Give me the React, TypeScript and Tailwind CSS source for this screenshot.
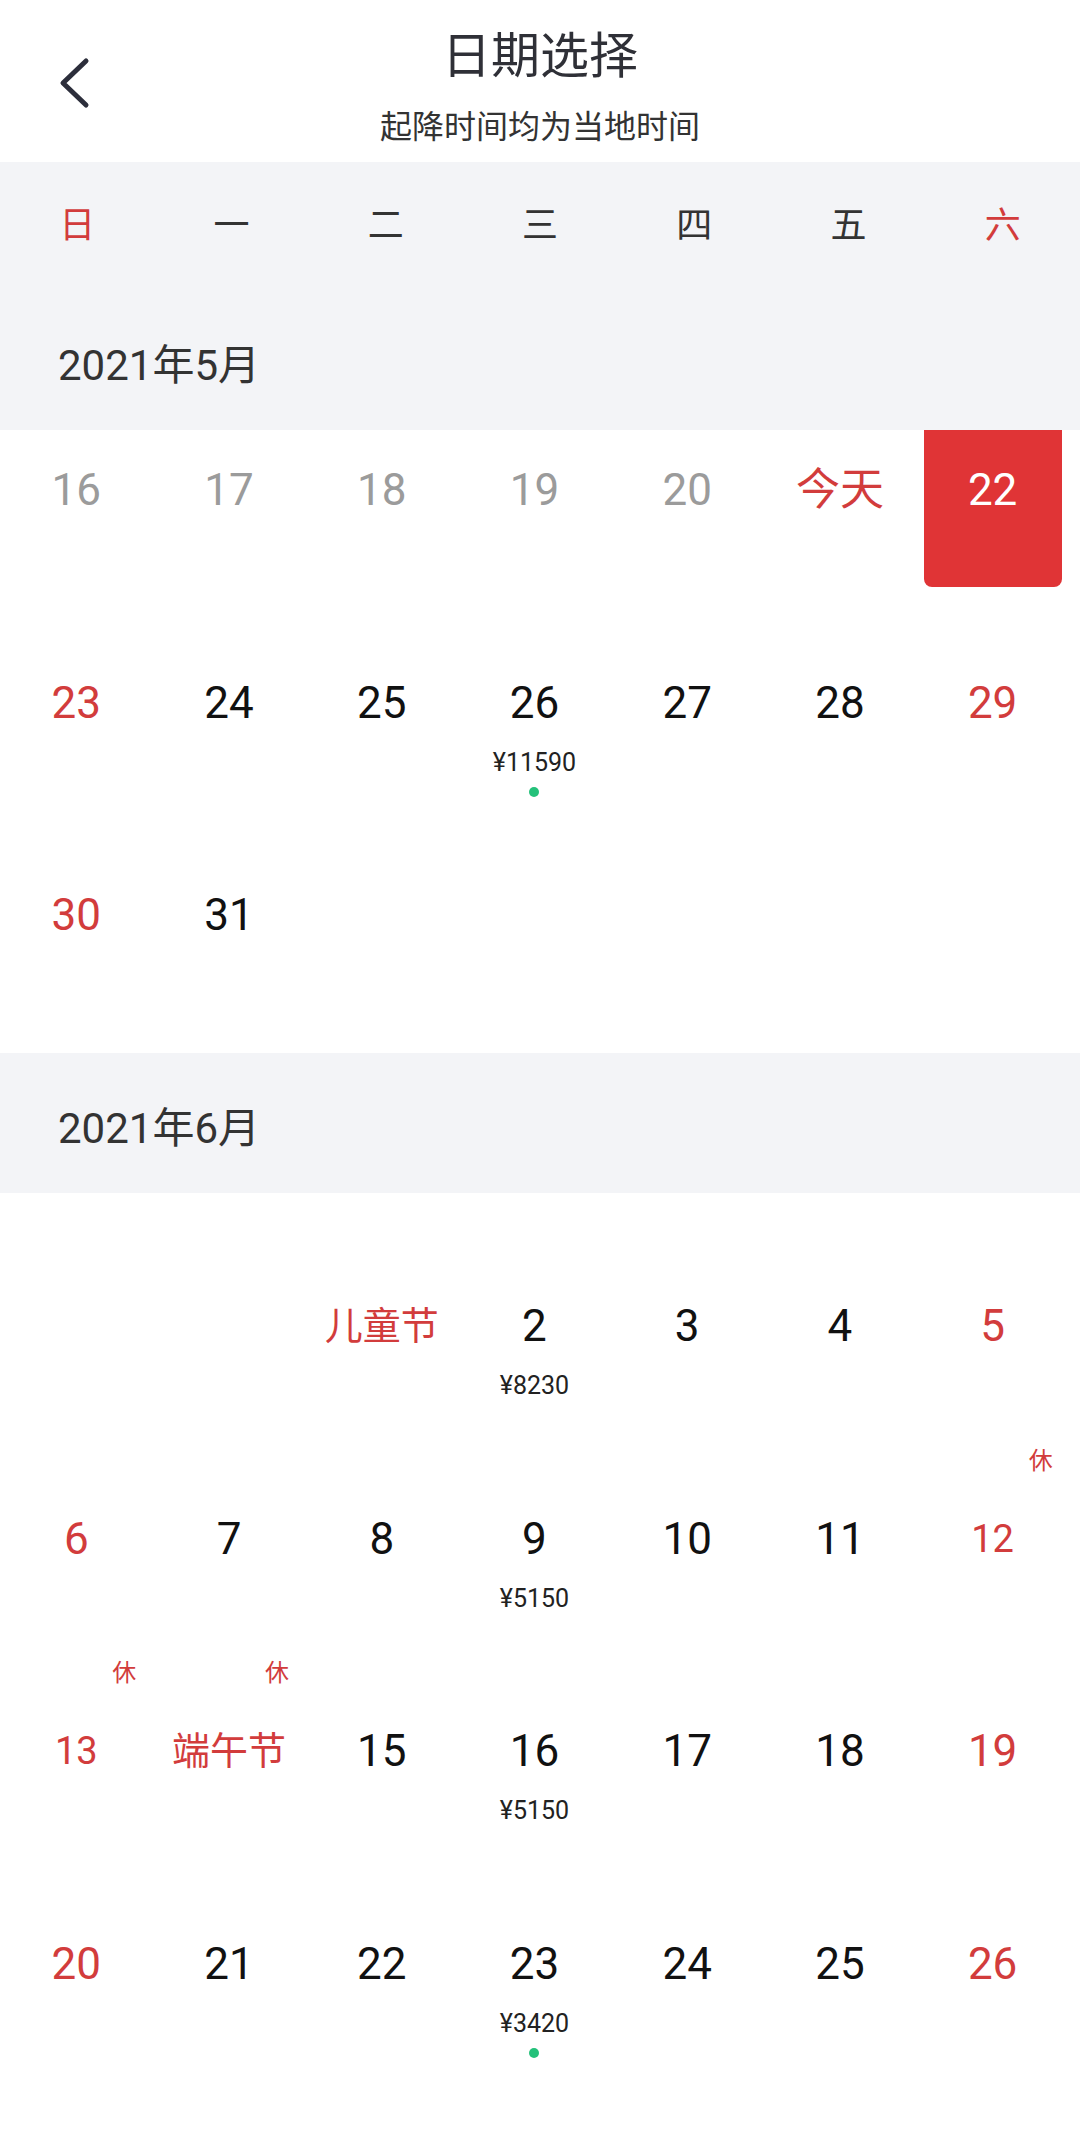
import React from "react";

type Tone = "past" | "normal" | "red" | "selected";

type Day = {
  label: string;
  tone: Tone;
  small?: boolean;
  price?: string;
  dot?: boolean;
  rest?: boolean;
} | null;

const weekdays = ["日", "一", "二", "三", "四", "五", "六"];

// 5月：前几行已滚到月份标题下面
const mayDays: Day[] = [
  { label: "16", tone: "past" },
  { label: "17", tone: "past" },
  { label: "18", tone: "past" },
  { label: "19", tone: "past" },
  { label: "20", tone: "past" },
  { label: "今天", tone: "red" },
  { label: "22", tone: "selected" },
  { label: "23", tone: "red" },
  { label: "24", tone: "normal" },
  { label: "25", tone: "normal" },
  { label: "26", tone: "normal", price: "¥11590", dot: true },
  { label: "27", tone: "normal" },
  { label: "28", tone: "normal" },
  { label: "29", tone: "red" },
  { label: "30", tone: "red" },
  { label: "31", tone: "normal" },
];

const juneDays: Day[] = [
  null,
  null,
  { label: "儿童节", tone: "red", small: true },
  { label: "2", tone: "normal", price: "¥8230" },
  { label: "3", tone: "normal" },
  { label: "4", tone: "normal" },
  { label: "5", tone: "red" },
  { label: "6", tone: "red" },
  { label: "7", tone: "normal" },
  { label: "8", tone: "normal" },
  { label: "9", tone: "normal", price: "¥5150" },
  { label: "10", tone: "normal" },
  { label: "11", tone: "normal" },
  { label: "12", tone: "red", small: true, rest: true },
  { label: "13", tone: "red", small: true, rest: true },
  { label: "端午节", tone: "red", small: true, rest: true },
  { label: "15", tone: "normal" },
  { label: "16", tone: "normal", price: "¥5150" },
  { label: "17", tone: "normal" },
  { label: "18", tone: "normal" },
  { label: "19", tone: "red" },
  { label: "20", tone: "red" },
  { label: "21", tone: "normal" },
  { label: "22", tone: "normal" },
  { label: "23", tone: "normal", price: "¥3420", dot: true },
  { label: "24", tone: "normal" },
  { label: "25", tone: "normal" },
  { label: "26", tone: "red" },
];

const toneClass: Record<Tone, string> = {
  past: "text-[#9b9b9b]",
  normal: "text-[#111111]",
  red: "text-[#d23c3c]",
  selected: "text-white",
};

function DayCell({ day }: { day: Day }) {
  if (!day) return <div />;
  return (
    <div className="relative flex justify-center">
      <div
        className={`w-[138px] h-[172px] rounded-[8px] flex flex-col items-center pt-[53px] ${
          day.tone === "selected" ? "bg-[#e03436]" : ""
        }`}
      >
        <div className="h-[44px] flex items-center">
          <span
            className={`leading-none ${day.small ? "text-[38px]" : "text-[44px]"} ${toneClass[day.tone]}`}
          >
            {day.label}
          </span>
        </div>
        {day.price && (
          <span className="mt-[25px] text-[25px] leading-none text-[#222222]">
            {day.price}
          </span>
        )}
        {day.dot && (
          <span className="mt-[12px] w-[10px] h-[10px] rounded-full bg-[#24c17a]" />
        )}
      </div>
      {day.rest && (
        <span className="absolute left-1/2 ml-[36px] top-[-15px] text-[24px] leading-none text-[#d23c3c]">
          休
        </span>
      )}
    </div>
  );
}

function MonthHeader({ title }: { title: string }) {
  return (
    <div className="h-[140px] bg-[#f3f4f7] flex items-center pl-[58px] pt-[12px]">
      <span className="text-[42px] leading-none text-[#333333]">{title}</span>
    </div>
  );
}

export default function App() {
  return (
    <div className="w-[1080px] h-[2131px] overflow-hidden bg-white font-[Roboto,'Noto_Sans_CJK_SC',sans-serif]">
      {/* Top bar */}
      <div className="h-[162px] grid grid-cols-[160px_1fr_160px]">
        <div className="pl-[56px] pt-[54px]">
          <svg width="36" height="58" viewBox="0 0 36 58" fill="none">
            <path
              d="M30 7 L7 29 L30 51"
              stroke="#2c2e3b"
              strokeWidth={5}
              strokeLinecap="round"
              strokeLinejoin="round"
            />
          </svg>
        </div>
        <div className="flex flex-col items-center pt-[32px]">
          <h1 className="text-[49px] leading-none text-[#2f3037]">日期选择</h1>
          <p className="mt-[30px] text-[32px] leading-none text-[#333333]">
            起降时间均为当地时间
          </p>
        </div>
        <div />
      </div>

      {/* Weekday bar */}
      <div className="h-[128px] bg-[#f3f4f7] grid grid-cols-7 items-center">
        {weekdays.map((w, i) => (
          <span
            key={w}
            className={`text-center text-[36px] leading-none ${
              i === 0 || i === 6 ? "text-[#d23c3c]" : "text-[#333333]"
            }`}
          >
            {w}
          </span>
        ))}
      </div>

      {/* May */}
      <MonthHeader title="2021年5月" />
      <div className="overflow-hidden">
        <div className="w-[1069px] -mt-[15px] grid grid-cols-7 auto-rows-[212.7px]">
          {mayDays.map((d, i) => (
            <DayCell key={i} day={d} />
          ))}
        </div>
      </div>

      {/* June */}
      <MonthHeader title="2021年6月" />
      <div className="w-[1069px] pt-[58px] grid grid-cols-7 auto-rows-[212.7px]">
        {juneDays.map((d, i) => (
          <DayCell key={i} day={d} />
        ))}
      </div>
    </div>
  );
}
